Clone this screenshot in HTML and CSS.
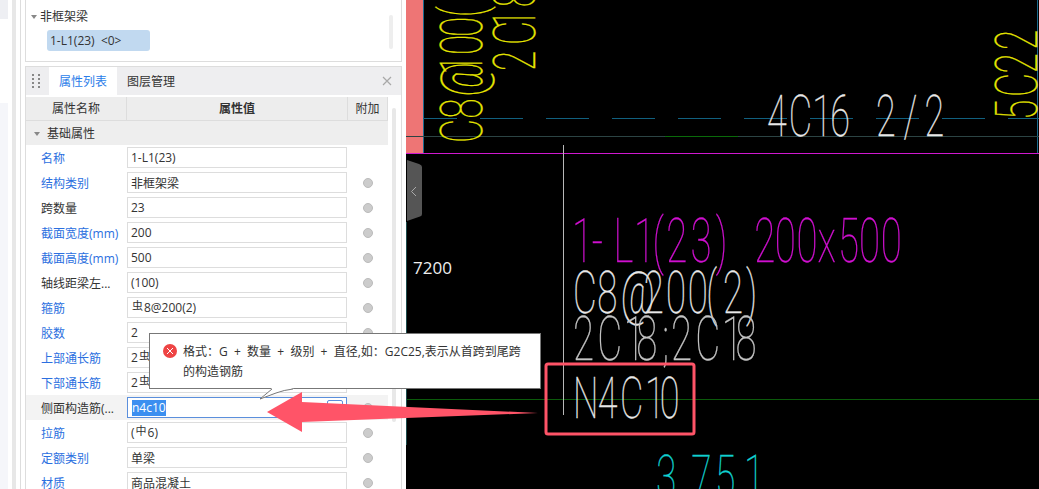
FILE: index.html
```html
<!DOCTYPE html>
<html lang="zh-CN">
<head>
    <meta charset="UTF-8">
    <title>属性列表</title>
    <link rel="stylesheet" href="styles.css">
</head>
<body>
    <div class="rail">
        <div class="rail-pane">
            <div class="rail-top"></div>
            <div class="rail-bottom"></div>
        </div>
        <div class="rail-bar"></div>
        <div class="rail-line"></div>
    </div>

    <div class="panels">
        <!-- 构件列表 -->
        <div class="tree">
            <div class="tree-group"><span class="caret"></span>非框架梁</div>
            <div class="tree-item">1-L1(23)&nbsp;&nbsp;&lt;0&gt;</div>
            <div class="tree-scroll"></div>
        </div>

        <!-- 属性列表 -->
        <div class="props">
            <div class="tabs">
                <div class="grip">
                    <i></i><i></i><i></i><i></i><i></i><i></i><i></i><i></i>
                </div>
                <div class="tab active">属性列表</div>
                <div class="tab">图层管理</div>
                <svg class="close" width="10" height="10" viewBox="0 0 10 10">
                    <path d="M1 1L9 9M9 1L1 9" stroke="#a8a8a8" stroke-width="1.2" fill="none"/>
                </svg>
            </div>
            <div class="props-body">
                <div class="props-table">
                    <div class="head">
                        <div class="head-name">属性名称</div>
                        <div class="head-value">属性值</div>
                        <div class="head-extra">附加</div>
                    </div>
                    <div class="section"><span class="caret"></span>基础属性</div>

                    <div class="row"><div class="name link">名称</div><div class="value">1-L1(23)</div></div>
                    <div class="row"><div class="name link">结构类别</div><div class="value">非框架梁</div><span class="dot"></span></div>
                    <div class="row"><div class="name">跨数量</div><div class="value">23</div><span class="dot"></span></div>
                    <div class="row"><div class="name link">截面宽度(mm)</div><div class="value">200</div><span class="dot"></span></div>
                    <div class="row"><div class="name link">截面高度(mm)</div><div class="value">500</div><span class="dot"></span></div>
                    <div class="row"><div class="name">轴线距梁左...</div><div class="value">(100)</div><span class="dot"></span></div>
                    <div class="row"><div class="name link">箍筋</div><div class="value"><span class="bar-mark">虫</span>8@200(2)</div><span class="dot"></span></div>
                    <div class="row"><div class="name link">胶数</div><div class="value">2</div><span class="dot"></span></div>
                    <div class="row"><div class="name link">上部通长筋</div><div class="value">2<span class="bar-mark">虫</span>18</div><span class="dot"></span></div>
                    <div class="row"><div class="name link">下部通长筋</div><div class="value">2<span class="bar-mark">虫</span>18</div><span class="dot"></span></div>
                    <div class="row current">
                        <div class="name">侧面构造筋(...</div>
                        <div class="value editing"><span class="selected">n4c10</span><span class="more"></span></div>
                        <span class="dot"></span>
                    </div>
                    <div class="row"><div class="name link">拉筋</div><div class="value">(<span class="bar-mark">中</span>6)</div><span class="dot"></span></div>
                    <div class="row"><div class="name link">定额类别</div><div class="value">单梁</div><span class="dot"></span></div>
                    <div class="row"><div class="name link">材质</div><div class="value">商品混凝土</div><span class="dot"></span></div>
                </div>
                <div class="props-scroll"><div class="props-thumb"></div></div>
            </div>
        </div>
    </div>

    <div class="gap"></div>

    <!-- CAD 绘图区 -->
    <div class="canvas">
        <svg class="drawing" width="633" height="489" viewBox="406 0 633 489">
            <rect x="406" y="0" width="17" height="153" fill="#ee7575"/>
            <path d="M423.5 0V153M1037.5 0V153" stroke="#1a6a8e" fill="none"/>
            <path d="M406 136.5H1039" stroke="#2c4444" fill="none"/>
            <path d="M665 136.5H738" stroke="#0a6a0a" fill="none"/>
            <path d="M423 118.5H1039" stroke="#11607f" stroke-dasharray="43 23" stroke-dashoffset="9" fill="none"/>
            <path d="M406 153.5H1039" stroke="#d018d0" fill="none"/>
            <path d="M407 399.5H1039" stroke="#0b5a0b" fill="none"/>
            <path d="M406.5 222V445" stroke="#1c4c4c" fill="none"/>
            <path d="M563.5 145V415" stroke="#b8b8b8" fill="none"/>
            <path d="M407 160L419 164Q422 165 422 167V214Q422 216 420 216.5L407 221Z" fill="#555"/>
            <path d="M416 187L411.5 191.5L416 196" stroke="#aaa" fill="none"/>

            <text class="cad yellow" transform="translate(482 143) rotate(-90) scale(.62 1)" font-size="60" x="0 39 75 110 142 171 203">C8@100(</text>
            <text class="cad yellow" transform="translate(535 71) rotate(-90) scale(.62 1)" font-size="60" x="0 42 67 103">2C18</text>
            <text class="cad yellow" transform="translate(1037 120) rotate(-90) scale(.62 1)" font-size="60" x="0 37 75 113">5C22</text>
            <text class="cad grey" transform="translate(767 136) scale(.62 1)" font-size="58" x="0 35 73 102 150 176 220 254">4C16 2/2</text>
            <text class="cad magenta" transform="translate(572 262) scale(.62 1)" font-size="62" x="0 32 67 100 130 152 191 232 263 294 327 362 396 429 463 498">1-L1(23) 200x500</text>
            <text class="cad grey" transform="translate(573 313) scale(.62 1)" font-size="59" x="0 39 77 114 150 185 215 242 279">C8@200(2)</text>
            <text class="cad dim" transform="translate(573 360) scale(.62 1)" font-size="62" x="0 39 82 102 144 158 197 240 262">2C18;2C18</text>
            <text class="cad grey" transform="translate(573 418) scale(.62 1)" font-size="58" x="0 40 76 116 140">N4C10</text>
            <text class="cad cyan" transform="translate(656 497) scale(.62 1)" font-size="60" x="0 57 95 142">3751</text>
        </svg>
        <div class="axis-label">7200</div>
    </div>

    <!-- 错误提示 -->
    <div class="tip">
        <div class="tip-icon">
            <svg width="14" height="14" viewBox="0 0 14 14">
                <circle cx="7" cy="7" r="7" fill="#ee4444"/>
                <path d="M4 4L10 10M10 4L4 10" stroke="#fff" stroke-width="1" fill="none"/>
            </svg>
        </div>
        <div class="tip-text">格式：G&nbsp;&nbsp;+&nbsp;&nbsp;数量&nbsp;&nbsp;+&nbsp;&nbsp;级别&nbsp;&nbsp;+&nbsp;&nbsp;直径,如：G2C25,表示从首跨到尾跨<br>的构造钢筋</div>
    </div>

    <!-- 标注 -->
    <svg class="markup" width="1039" height="489" viewBox="0 0 1039 489">
        <path d="M260 399L272 388H294Z" fill="#fff"/>
        <path d="M260 399L272 389M260 399L276 393Q284 390 293 389" stroke="#777" fill="none"/>
        <path d="M267 412L302 392V402L538 413L302 422V432Z" fill="#ff5468"/>
        <rect x="546" y="364" width="148" height="70" rx="2" stroke="#ff5468" stroke-width="3" fill="none"/>
    </svg>
</body>
</html>
```

FILE: styles.css
```css
html, body {
    margin: 0;
    padding: 0;
    height: 100%;
}
body {
    position: relative;
    display: flex;
    width: 1039px;
    height: 489px;
    overflow: hidden;
    background: #fff;
    font-family: "Open Sans", "Noto Sans CJK SC", sans-serif;
    font-size: 12px;
    color: #333;
}

/* left rail */
.rail {
    display: flex;
    flex: 0 0 25px;
}
.rail-pane {
    display: flex;
    flex-direction: column;
    justify-content: space-between;
    width: 8px;
}
.rail-top {
    height: 19px;
    background: #eeeff3;
}
.rail-bottom {
    height: 386px;
    background: #f5f6fa;
}
.rail-bar {
    width: 4px;
    margin-left: 4px;
    background: #e7e7e7;
}
.rail-line {
    width: 1px;
    margin-left: 4px;
    background: #ddd;
}

/* panels */
.panels {
    display: flex;
    flex-direction: column;
    flex: 0 0 377px;
    gap: 4px;
}
.gap {
    flex: 0 0 4px;
}
.tree {
    position: relative;
    height: 62px;
    box-sizing: border-box;
    padding-top: 7px;
    border: 1px solid #ddd;
    border-top: none;
}
.tree-group {
    display: flex;
    align-items: center;
    height: 18px;
    padding-left: 5px;
}
.caret {
    width: 0;
    height: 0;
    margin: 2px 3px 0 0;
    border: 3.5px solid transparent;
    border-top: 4px solid #888;
    border-bottom: none;
}
.tree-item {
    width: 100px;
    height: 21px;
    margin: 5px 0 0 21px;
    padding-left: 3px;
    line-height: 21px;
    border-radius: 3px;
    background: #c1d9f0;
    white-space: nowrap;
}
.tree-scroll {
    position: absolute;
    top: 15px;
    right: 8px;
    width: 4px;
    height: 34px;
    border-radius: 2px;
    background: #eee;
}

.props {
    flex: 1;
    display: flex;
    flex-direction: column;
    border: 1px solid #ddd;
    border-bottom: none;
    min-height: 0;
}
.tabs {
    position: relative;
    display: flex;
    align-items: flex-end;
    flex: 0 0 28px;
    margin-bottom: 2px;
    background: #eeeef0;
}
.grip {
    display: grid;
    grid-template-columns: 2px 2px;
    gap: 2px 4px;
    align-self: center;
    width: 8px;
    margin: 0 9px 0 6px;
}
.grip i {
    height: 2px;
    background: #888;
}
.tab {
    width: 68px;
    height: 28px;
    line-height: 29px;
    text-align: center;
}
.tab.active {
    background: #fff;
    color: #2b7de9;
}
.close {
    position: absolute;
    right: 9px;
    top: 9px;
}

.props-body {
    display: flex;
    flex: 1;
    min-height: 0;
}
.props-table {
    width: 362px;
}
.head {
    display: flex;
    height: 24px;
    line-height: 23px;
    text-align: center;
    background: #ededed;
    border-bottom: 1px solid #ddd;
    box-sizing: border-box;
}
.head-name {
    width: 100px;
    border-right: 1px solid #ddd;
}
.head-value {
    width: 220px;
    border-right: 1px solid #ddd;
    font-weight: 700;
}
.head-extra {
    flex: 1;
    border-right: 1px solid #ddd;
}
.section {
    display: flex;
    align-items: center;
    height: 24px;
    padding-left: 8px;
    background: #eee;
}
.section .caret {
    margin-right: 7px;
}
.row {
    display: flex;
    align-items: center;
    height: 25px;
}
.row.current {
    background: #f3f3f3;
}
.name {
    width: 101px;
    box-sizing: border-box;
    padding-left: 15px;
    white-space: nowrap;
    overflow: hidden;
}
.name.link {
    color: #2b6fe0;
}
.value {
    display: flex;
    align-items: center;
    width: 220px;
    height: 21px;
    box-sizing: border-box;
    padding-left: 3px;
    border: 1px solid #ddd;
    background: #fff;
    white-space: pre;
}
.value.editing {
    position: relative;
    padding-left: 4px;
    border-color: #5b8fdc;
}
.selected {
    background: #3b8ff0;
    color: #fff;
    line-height: 16px;
}
.more {
    position: absolute;
    right: 3px;
    top: 2px;
    width: 16px;
    height: 14px;
    box-sizing: border-box;
    border: 1px solid #5b8fdc;
    border-radius: 2px;
}
.bar-mark {
    font-size: 11px;
    line-height: 11px;
    margin: 0 1px 5px;
}
.dot {
    width: 8px;
    height: 8px;
    margin-left: 16px;
    border: 1px solid #bbb;
    border-radius: 50%;
    box-sizing: content-box;
    background: #ccc;
}
.props-scroll {
    flex: 1;
    padding: 11px 5px 0 4px;
}
.props-thumb {
    height: 314px;
    border-radius: 2px;
    background: #e8e8e8;
}

/* drawing area */
.canvas {
    position: relative;
    flex: 1;
    background: #000;
}
.drawing {
    display: block;
}
.cad {
    font-family: "Roboto", sans-serif;
    font-weight: 100;
    stroke-width: .3;
}
.yellow { fill: #e6e600; stroke: #e6e600; }
.grey { fill: #e8e8e8; stroke: #e8e8e8; }
.dim { fill: #c4c4c4; stroke: #c4c4c4; }
.magenta { fill: #d010d0; stroke: #d010d0; }
.cyan { fill: #10d0d0; stroke: #10d0d0; }
.axis-label {
    position: absolute;
    left: 7px;
    top: 256px;
    font-size: 17px;
    color: #eee;
}

/* overlays */
.tip {
    position: absolute;
    left: 149px;
    top: 333px;
    display: flex;
    width: 392px;
    height: 56px;
    box-sizing: border-box;
    padding: 8px 8px 0 13px;
    border: 1px solid #777;
    background: #fff;
}
.tip-icon {
    flex: 0 0 20px;
    padding-top: 2px;
}
.tip-text {
    width: 348px;
    line-height: 20px;
    white-space: nowrap;
}
.markup {
    position: absolute;
    left: 0;
    top: 0;
    pointer-events: none;
}
```
